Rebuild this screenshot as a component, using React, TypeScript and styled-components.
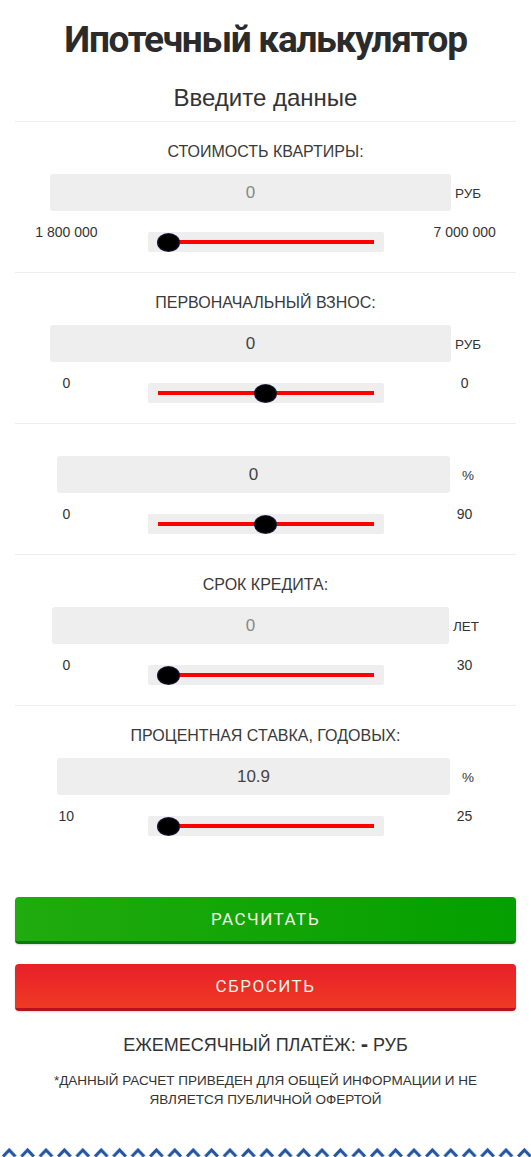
import React from "react";
import styled, { createGlobalStyle } from "styled-components";

const Global = createGlobalStyle`
  html, body { margin: 0; padding: 0; background: #fff; }
  body { font-family: "Liberation Sans", Arial, sans-serif; color: #333; }
  * { box-sizing: border-box; }
`;

const Page = styled.div`
  width: 531px;
  padding: 0 15px;
  overflow: hidden;
`;

const Title = styled.h1`
  margin: 18px 0 0;
  font-family: Roboto, "Liberation Sans", sans-serif;
  font-weight: 700;
  font-size: 37px;
  line-height: 44px;
  letter-spacing: -1.3px;
  text-align: center;
  color: #2b2b2b;
`;

const Subtitle = styled.h2`
  margin: 22px 0 9px;
  font-weight: 400;
  font-size: 24px;
  line-height: 28px;
  text-align: center;
  color: #333;
`;

const Section = styled.section`
  border-top: 1px solid #eee;
  padding: 20px 0 20px;
`;

const Label = styled.div<{ $empty?: boolean }>`
  font-size: 16px;
  line-height: ${(p) => (p.$empty ? "0" : "20px")};
  height: ${(p) => (p.$empty ? "0" : "20px")};
  margin-bottom: 12px;
  text-align: center;
  text-transform: uppercase;
  color: #3a3a3a;
`;

const InputRow = styled.div`
  display: flex;
  justify-content: center;
  align-items: center;
`;

const Field = styled.input<{ $w: number }>`
  width: ${(p) => p.$w}px;
  height: 37px;
  border: none;
  border-radius: 3px;
  background: #eee;
  outline: none;
  text-align: center;
  font-family: "Liberation Sans", Arial, sans-serif;
  font-size: 17px;
  color: #444;
  padding: 0;
  &::placeholder { color: #888; }
`;

const Unit = styled.span<{ $gap: number }>`
  margin-left: ${(p) => p.$gap}px;
  padding-top: 2px;
  font-size: 13.5px;
  color: #333;
`;

const RangeRow = styled.div`
  display: grid;
  grid-template-columns: 1fr 2fr 1fr;
  margin: 12px -15px 0;
  align-items: start;
`;

const Edge = styled.span`
  font-size: 14px;
  line-height: 18px;
  text-align: center;
  color: #333;
`;

const SliderCell = styled.div`
  display: flex;
  justify-content: center;
  padding-top: 9px;
`;

const Range = styled.input`
  -webkit-appearance: none;
  appearance: none;
  width: 236px;
  height: 20px;
  margin: 0;
  padding: 0 10px;
  background: #eee;
  border-radius: 2px;
  outline: none;
  &::-webkit-slider-runnable-track {
    height: 4px;
    background: #ff0000;
    border: none;
  }
  &::-webkit-slider-thumb {
    -webkit-appearance: none;
    width: 21px;
    height: 17px;
    margin-top: -6.5px;
    border-radius: 50%;
    background: #000;
    box-shadow: 0 0 0 1px #1b1b3a;
    border: none;
  }
`;

const Buttons = styled.div`
  margin-top: 41px;
  display: flex;
  flex-direction: column;
  gap: 20px;
`;

const Btn = styled.button<{ $kind: "go" | "reset" }>`
  width: 100%;
  height: 47px;
  border: none;
  border-radius: 4px;
  border-bottom: 3px solid ${(p) => (p.$kind === "go" ? "#0b7c0b" : "#b5121a")};
  background: ${(p) =>
    p.$kind === "go"
      ? "linear-gradient(to right, #20ab0e, #049f00)"
      : "linear-gradient(to bottom, #e81f29, #ef3a24)"};
  color: #f6f5e6;
  font-family: Roboto, "Liberation Sans", sans-serif;
  font-weight: 400;
  font-size: 17px;
  letter-spacing: 1.5px;
  box-shadow: 0 1px 2px rgba(0, 0, 0, 0.15);
  cursor: pointer;
`;

const Result = styled.div`
  margin-top: 23px;
  font-size: 18px;
  line-height: 22px;
  text-align: center;
  color: #333;
`;

const Dash = styled.b`
  font-weight: 900;
  font-size: 22px;
  line-height: 0;
`;

const Note = styled.p`
  margin: 15px 0 0;
  font-size: 13.5px;
  line-height: 19px;
  text-align: center;
  color: #333;
`;

const Wave = styled.div`
  margin: 34px -15px 0;
  height: 14px;
  line-height: 0;
`;

type Item = {
  label?: string;
  value?: string;
  placeholder?: string;
  unit: string;
  w: number;
  gap: number;
  min: number;
  max: number;
  val: number;
  minText: string;
  maxText: string;
};

const items: Item[] = [
  { label: "Стоимость квартиры:", placeholder: "0", unit: "РУБ", w: 401, gap: 4, min: 1800000, max: 7000000, val: 1800000, minText: "1 800 000", maxText: "7 000 000" },
  { label: "Первоначальный взнос:", value: "0", unit: "РУБ", w: 401, gap: 4, min: 0, max: 100, val: 50, minText: "0", maxText: "0" },
  { value: "0", unit: "%", w: 393, gap: 12, min: 0, max: 90, val: 45, minText: "0", maxText: "90" },
  { label: "Срок кредита:", placeholder: "0", unit: "ЛЕТ", w: 397, gap: 4, min: 0, max: 30, val: 0, minText: "0", maxText: "30" },
  { label: "Процентная ставка, годовых:", value: "10.9", unit: "%", w: 393, gap: 12, min: 10, max: 25, val: 10, minText: "10", maxText: "25" },
];

function WaveStrip() {
  return (
    <svg width="531" height="14" viewBox="0 0 531 14">
      <defs>
        <pattern id="chev" width="18.4" height="14" patternUnits="userSpaceOnUse">
          <path d="M3 13.5 L9.2 7 L15.4 13.5" fill="none" stroke="#2456a4" strokeWidth="3.2" />
        </pattern>
      </defs>
      <rect x="0" y="0" width="531" height="14" fill="url(#chev)" />
    </svg>
  );
}

export default function App() {
  return (
    <Page>
      <Global />
      <Title>Ипотечный калькулятор</Title>
      <Subtitle>Введите данные</Subtitle>
      {items.map((it, i) => (
        <Section key={i}>
          <Label $empty={!it.label}>{it.label}</Label>
          <InputRow>
            <Field
              $w={it.w}
              type="text"
              defaultValue={it.value}
              placeholder={it.placeholder}
            />
            <Unit $gap={it.gap}>{it.unit}</Unit>
          </InputRow>
          <RangeRow>
            <Edge>{it.minText}</Edge>
            <SliderCell>
              <Range type="range" min={it.min} max={it.max} defaultValue={it.val} />
            </SliderCell>
            <Edge>{it.maxText}</Edge>
          </RangeRow>
        </Section>
      ))}
      <Buttons>
        <Btn $kind="go">РАСЧИТАТЬ</Btn>
        <Btn $kind="reset">СБРОСИТЬ</Btn>
      </Buttons>
      <Result>
        ЕЖЕМЕСЯЧНЫЙ ПЛАТЁЖ: <Dash>-</Dash> РУБ
      </Result>
      <Note>
        *ДАННЫЙ РАСЧЕТ ПРИВЕДЕН ДЛЯ ОБЩЕЙ ИНФОРМАЦИИ И НЕ
        <br />
        ЯВЛЯЕТСЯ ПУБЛИЧНОЙ ОФЕРТОЙ
      </Note>
      <Wave>
        <WaveStrip />
      </Wave>
    </Page>
  );
}
